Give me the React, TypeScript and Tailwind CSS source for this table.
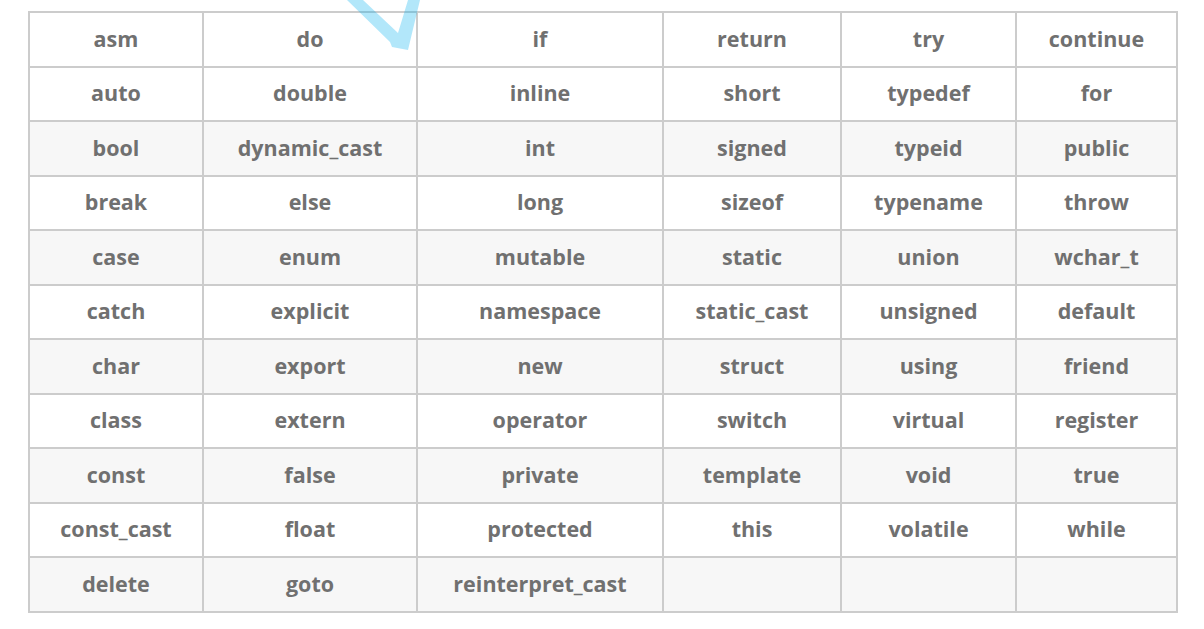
import React from "react";

const rows: string[][] = [
  ["asm", "do", "if", "return", "try", "continue"],
  ["auto", "double", "inline", "short", "typedef", "for"],
  ["bool", "dynamic_cast", "int", "signed", "typeid", "public"],
  ["break", "else", "long", "sizeof", "typename", "throw"],
  ["case", "enum", "mutable", "static", "union", "wchar_t"],
  ["catch", "explicit", "namespace", "static_cast", "unsigned", "default"],
  ["char", "export", "new", "struct", "using", "friend"],
  ["class", "extern", "operator", "switch", "virtual", "register"],
  ["const", "false", "private", "template", "void", "true"],
  ["const_cast", "float", "protected", "this", "volatile", "while"],
  ["delete", "goto", "reinterpret_cast", "", "", ""],
];

export default function App() {
  return (
    <div className="relative w-[1204px] h-[629px] bg-white overflow-hidden pt-[11px] pl-[28px]" style={{ fontFamily: '"Open Sans", "Liberation Sans", sans-serif' }}>
      <table className="table-fixed border-collapse w-[1148px] text-[#707070] text-[21.5px] font-bold">
        <colgroup>
          <col className="w-[174px]" />
          <col className="w-[214px]" />
          <col className="w-[246px]" />
          <col className="w-[178px]" />
          <col className="w-[175px]" />
          <col className="w-[161px]" />
        </colgroup>
        <tbody>
          {rows.map((r, i) => (
            <tr key={i} className={i >= 2 && i % 2 === 0 ? "bg-[#f7f7f7] h-[54.5px]" : "bg-white h-[54.5px]"}>
              {r.map((c, j) => (
                <td key={j} className="border-2 border-[#cccccc] text-center align-middle pt-0 px-0 pb-[2px] leading-none">
                  {c}
                </td>
              ))}
            </tr>
          ))}
        </tbody>
      </table>
      <svg className="absolute left-0 top-0 pointer-events-none" width="1204" height="629">
        <polygon points="347,0 363,0 398,33 408,0 420,0 408,50 392,47 390,42" fill="#00b0f0" fillOpacity="0.3" />
      </svg>
    </div>
  );
}
